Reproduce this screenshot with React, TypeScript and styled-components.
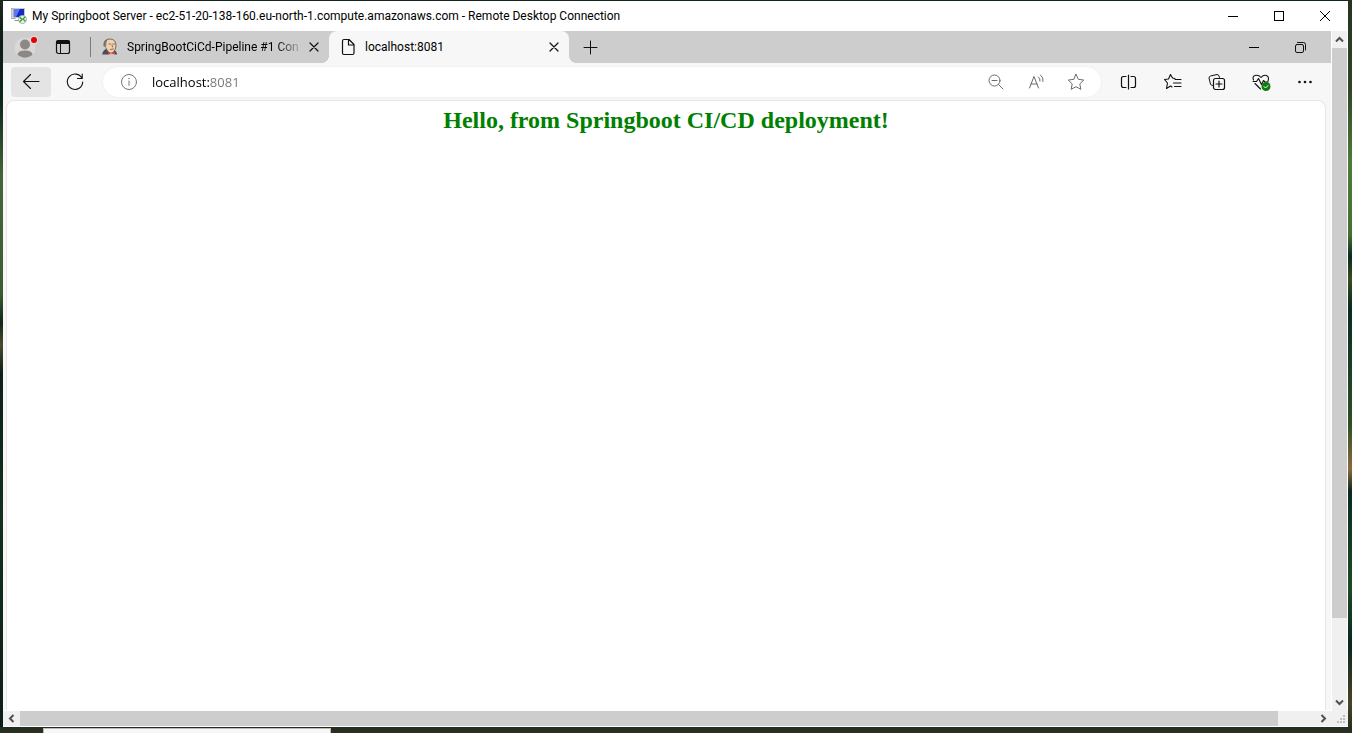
import React from 'react';
import styled, { createGlobalStyle, css } from 'styled-components';

const GlobalStyle = createGlobalStyle`
  *, *::before, *::after { box-sizing: border-box; }
  body { margin: 0; background: #12261d; font-family: Roboto, "Open Sans", sans-serif; font-size: 12px; color: #000; }
  button, input { font: inherit; color: inherit; }
`;

const Desktop = styled.div`
  display: flex;
  flex-direction: column;
  min-height: 100vh;
  padding: 1px 4px 0 3px;
  background:
    linear-gradient(#232c20, #2b3122) bottom / 100% 6px no-repeat,
    linear-gradient(#1c2a1e, #0b1d16 6%, #10281b 14%, #46653a 24%, #3f5c30 40%, #10281d 44%, #4a4a2c 47%, #0c2018 51%, #14301f 70%, #0c1d16) left / 3px 100% no-repeat,
    linear-gradient(#26331f, #2f4526 12%, #4f7a38 22%, #47702f 32%, #0b2a20 35%, #3a4c20 38%, #0a2a22 42%, #2d5026 58%, #8c6a3c 64%, #0a2a22 67%, #1d4a24 80%, #0a2620 88%, #4a4424 96%, #202c1d) right / 4px 100% no-repeat;
`;

const Window = styled.main`
  flex: 1;
  display: flex;
  flex-direction: column;
  background: #fff;
`;

const TitleBar = styled.header`
  display: flex;
  align-items: center;
  height: 30px;
  padding-left: 8px;
`;

const Title = styled.h1`
  flex: 1;
  margin: 0 0 0 5px;
  font-size: 12px;
  line-height: 16px;
  font-weight: 400;
  white-space: nowrap;
`;

const PlainButton = styled.button`
  display: flex;
  align-items: center;
  justify-content: center;
  flex: none;
  padding: 0;
  border: 0;
  background: none;
`;

const CaptionButton = styled(PlainButton)`
  width: 46px;
  height: 30px;
`;

const Session = styled.div`
  flex: 1;
  display: grid;
  grid-template-columns: minmax(0, 1fr) 16px;
  grid-template-rows: minmax(0, 1fr) 15px;
  background: #f0f0f0;
  border-bottom: 1px solid #fff;
`;

const Browser = styled.section`
  display: flex;
  flex-direction: column;
  background: #f7f7f7;
  border-right: 1px solid #fff;
  border-bottom: 1px solid #fff;
`;

const TabStrip = styled.div`
  display: flex;
  align-items: center;
  height: 32px;
  padding-right: 8px;
  background: #cdcdcd;
`;

const ProfileButton = styled(PlainButton)`
  width: 40px;
  height: 32px;
  padding-left: 6px;
`;

const TabActionsButton = styled(PlainButton)`
  width: 40px;
  height: 32px;
`;

const Divider = styled.span`
  width: 1px;
  height: 20px;
  margin-left: 7px;
  background: #7a7a7a;
`;

const Tab = styled.div<{ $active?: boolean }>`
  position: relative;
  display: flex;
  align-items: center;
  flex: none;
  width: ${p => (p.$active ? 240 : 238)}px;
  height: 32px;
  padding: 0 5px 0 11px;
  ${p => p.$active && css`
    background: #f7f7f7;
    border-radius: 8px 8px 0 0;
    &::before, &::after {
      content: '';
      position: absolute;
      bottom: 0;
      width: 8px;
      height: 8px;
    }
    &::before { left: -8px; background: radial-gradient(circle at 0 0, transparent 8px, #f7f7f7 8px); }
    &::after { right: -8px; background: radial-gradient(circle at 100% 0, transparent 8px, #f7f7f7 8px); }
  `}
`;

const TabLabel = styled.button<{ $fade?: boolean }>`
  flex: 1;
  display: flex;
  align-items: center;
  gap: 9px;
  min-width: 0;
  height: 32px;
  padding: 0;
  border: 0;
  background: none;
  white-space: nowrap;
  line-height: 16px;
  text-align: left;
  svg { flex: none; }
  span { flex: 1; min-width: 0; overflow: hidden; }
  ${p => p.$fade && css`
    span { mask-image: linear-gradient(to right, #000 calc(100% - 28px), transparent); }
  `}
`;

const CloseTab = styled(PlainButton)`
  width: 20px;
  height: 20px;
`;

const NewTab = styled(PlainButton)`
  width: 32px;
  height: 32px;
  margin-left: 5px;
`;

const Spacer = styled.span`
  flex: 1;
`;

const Toolbar = styled.div`
  display: flex;
  align-items: center;
  padding: 4px 4px 3px 8px;
`;

const NavButton = styled(PlainButton)<{ $hover?: boolean }>`
  width: 40px;
  height: 30px;
  border-radius: 4px;
  background: ${p => (p.$hover ? '#e4e4e4' : 'none')};
`;

const ToolButton = styled(PlainButton)`
  width: 44px;
  height: 30px;
`;

const Navigation = styled.nav`
  display: flex;
  gap: 4px;
`;

const AddressBar = styled.form`
  flex: 1;
  display: flex;
  align-items: center;
  height: 30px;
  margin: 0 6px 0 8px;
  padding: 0 5px 0 6px;
  border-radius: 15px;
  background: #fff;
  box-shadow: 0 0 2px #e4e4e4;
`;

const Address = styled.input`
  flex: 1;
  min-width: 0;
  height: 30px;
  margin-left: 3px;
  padding: 0;
  border: 0;
  outline: 0;
  font-family: "Open Sans", "Noto Sans", sans-serif;
  font-size: 13px;
  color: transparent;
  background: linear-gradient(to right, #000 57px, #767676 57px);
  background-clip: text;
`;

const Page = styled.article`
  flex: 1;
  margin: 0 5px 0 3px;
  border: 1px solid #e6e6e6;
  border-bottom: 0;
  border-radius: 8px 8px 0 0;
  background: #fff;
  text-align: center;
`;

const Greeting = styled.h2`
  margin: 5px 8px 20px;
  font: bold 24px/28px "Liberation Serif", "Times New Roman", serif;
  color: #008000;
`;

const ScrollBar = styled.div<{ $horizontal?: boolean }>`
  display: flex;
  flex-direction: ${p => (p.$horizontal ? 'row' : 'column')};
  min-width: 0;
  border-right: ${p => (p.$horizontal ? 0 : 1)}px solid #fff;
`;

const Arrow = styled(PlainButton)<{ $horizontal?: boolean }>`
  width: ${p => (p.$horizontal ? 17 : 15)}px;
  height: ${p => (p.$horizontal ? 15 : 17)}px;
`;

const Track = styled.div<{ $horizontal?: boolean }>`
  flex: 1;
  display: flex;
  flex-direction: ${p => (p.$horizontal ? 'row' : 'column')};
`;

const Thumb = styled.div<{ $visible: number }>`
  flex: ${p => p.$visible};
  background: #cdcdcd;
`;

const Remainder = styled.div<{ $hidden: number }>`
  flex: ${p => p.$hidden};
`;

const Grip = styled.div`
  display: flex;
  align-items: flex-end;
  justify-content: flex-end;
  padding: 2px;
`;

const Taskbar = styled.footer`
  height: 6px;
  padding: 1px 0 0 40px;
`;

const TaskPreview = styled.div`
  width: 288px;
  height: 5px;
  border: 1px solid #bbb;
  border-bottom: 0;
  background: #f7f7f7;
`;

const Icon = ({ w = 20, h = 20, color = '#111', stroke = 1, children }: {
  w?: number; h?: number; color?: string; stroke?: number; children: React.ReactNode;
}) => (
  <svg width={w} height={h} viewBox={`0 0 ${w} ${h}`} fill="none" stroke={color} strokeWidth={stroke}
    strokeLinecap="round" strokeLinejoin="round" aria-hidden="true">{children}</svg>
);

const RemoteIcon = () => (
  <Icon w={16} h={16}>
    <rect x="0.5" y="0.5" width="4" height="10" fill="#d4d6d8" stroke="#a5a9ae" />
    <rect x="2.5" y="0.5" width="11" height="9" fill="#1428c8" stroke="#c4c8d0" />
    <path d="M3 1h6L5 9H3z" fill="#5b78ee" stroke="none" />
    <path d="M4 12.5h4" stroke="#8a8a8a" />
    <circle cx="11.5" cy="11.5" r="4" fill="#eef2ec" stroke="#a9b0a9" />
    <path d="M9 9.5l2 2-2 2M14 9l-2 2 2 2" stroke="#2f9e32" strokeWidth="1.2" />
  </Icon>
);

const ProfileIcon = () => (
  <Icon w={24} h={24}>
    <g stroke="none">
      <circle cx="11" cy="13" r="10.5" fill="#dad8d6" />
      <circle cx="11" cy="9.5" r="5" fill="#8b8886" />
      <path d="M3.5 19.5Q4 15.5 11 15.5t7.5 4A10.5 10.5 0 0 1 3.5 19.5Z" fill="#8b8886" />
      <circle cx="20" cy="5" r="4" fill="#dedede" />
      <circle cx="20" cy="5" r="3" fill="#e60000" />
    </g>
  </Icon>
);

const ButlerIcon = () => (
  <Icon w={16} h={18}>
    <g stroke="none">
      <path d="M0 16.5Q1 12 4 11l8 1q3 1.5 3 4.5z" fill="#46515c" />
      <path d="M2 7Q2 1 8 1q5.5 0 6 6l-.5 4Q12 14.5 9 14.5q-4-.5-5-4Q2 10 2 7Z" fill="#f0d2ac" />
      <path d="M2 8Q1 3 5.5 1.5L4.5 5l-.5 5Z" fill="#8d8577" />
      <path d="M6 13l3 1.5 3-1 .5 3H6z" fill="#f7f7f7" />
      <path d="M6 13.5l3 1.2 3.5-1.4v3L9 15.5l-3 1.2z" fill="#d33833" />
    </g>
    <path d="M2 8Q1 1 8 1q6 0 6 7-.5 4-2 5.5M4 10q.5 2.5 2.5 3.5M7 6h1.5M11 6h1.5M10 7l.5 2M8.5 11.5l3-.5" stroke="#4a423c" strokeWidth=".7" />
  </Icon>
);

const CloseGlyph = () => (
  <Icon w={10} h={10}><path d="M1 1l8 8M9 1L1 9" strokeWidth="1.2" /></Icon>
);

const Chevron = ({ turn }: { turn: number }) => (
  <Icon w={11} h={11} color="#505050" stroke={2}>
    <path d="M2 7.5l3.5-3.5L9 7.5" strokeLinecap="butt" strokeLinejoin="miter" transform={`rotate(${turn} 5.5 5.5)`} />
  </Icon>
);

export default function App() {
  return (
    <Desktop>
      <GlobalStyle />
      <Window>
        <TitleBar>
          <RemoteIcon />
          <Title>My Springboot Server - ec2-51-20-138-160.eu-north-1.compute.amazonaws.com - Remote Desktop Connection</Title>
          <CaptionButton aria-label="Minimize"><Icon w={10} h={10} color="#000"><path d="M0 5.5h10" /></Icon></CaptionButton>
          <CaptionButton aria-label="Maximize"><Icon w={10} h={10} color="#000"><rect x="0.5" y="0.5" width="9" height="9" strokeLinejoin="miter" /></Icon></CaptionButton>
          <CaptionButton aria-label="Close"><Icon w={10} h={10} color="#000"><path d="M0 0l10 10M10 0L0 10" /></Icon></CaptionButton>
        </TitleBar>

        <Session>
          <Browser>
            <TabStrip>
              <ProfileButton aria-label="Profile"><ProfileIcon /></ProfileButton>
              <TabActionsButton aria-label="Tab actions">
                <Icon w={16} h={16}>
                  <rect x="1.5" y="1.5" width="13" height="13" rx="2" strokeWidth="1.2" />
                  <path d="M2 2.5h12M2 4h12" strokeWidth="2" />
                  <path d="M5.5 5v9" />
                </Icon>
              </TabActionsButton>
              <Divider />
              <Tab>
                <TabLabel $fade>
                  <ButlerIcon />
                  <span>SpringBootCiCd-Pipeline #1 Con</span>
                </TabLabel>
                <CloseTab aria-label="Close tab"><CloseGlyph /></CloseTab>
              </Tab>
              <Tab $active>
                <TabLabel>
                  <Icon w={16} h={18}>
                    <path d="M2.5 3q0-1.5 1.5-1.5h5l5 5V15q0 1.5-1.5 1.5H4q-1.5 0-1.5-1.5zM8.5 2v5H14" strokeWidth="1.2" />
                  </Icon>
                  <span>localhost:8081</span>
                </TabLabel>
                <CloseTab aria-label="Close tab"><CloseGlyph /></CloseTab>
              </Tab>
              <NewTab aria-label="New tab"><Icon w={15} h={15}><path d="M1 7.5h13M7.5 1v13" /></Icon></NewTab>
              <Spacer />
              <CaptionButton aria-label="Minimize browser"><Icon w={10} h={10} color="#000"><path d="M0 5.5h10" /></Icon></CaptionButton>
              <CaptionButton aria-label="Restore browser">
                <Icon w={11} h={11}>
                  <rect x="0.5" y="2.5" width="8" height="8" rx="1.5" />
                  <path d="M2.5.5H8.5q2 0 2 2V8" />
                </Icon>
              </CaptionButton>
            </TabStrip>

            <Toolbar>
              <Navigation>
                <NavButton $hover aria-label="Back">
                  <Icon><path d="M18 9.5H2.5M9.5 2.5L2.5 9.5l7 7" strokeWidth="1.1" /></Icon>
                </NavButton>
                <NavButton aria-label="Refresh">
                  <Icon><path d="M17 6.5A7.7 7.7 0 1 0 17.7 10M17.2 2v4.5h-4.7" strokeWidth="1.1" /></Icon>
                </NavButton>
              </Navigation>
              <AddressBar onSubmit={e => e.preventDefault()}>
                <NavButton type="button" aria-label="Site information">
                  <Icon color="#767676"><circle cx="10" cy="10" r="7.5" /><path d="M10 9v4.5" /><path d="M10 6.5v.1" strokeWidth="1.5" /></Icon>
                </NavButton>
                <Address aria-label="Address" defaultValue="localhost:8081" />
                <NavButton type="button" aria-label="Zoom out">
                  <Icon color="#6a6a6a"><circle cx="8.500" cy="8.500" r="5.500" /><path d="M12.5 12.5l4.5 4.5M6 8.5h5" /></Icon>
                </NavButton>
                <NavButton type="button" aria-label="Read aloud">
                  <Icon color="#6a6a6a"><path d="M3.500 16L8 4.500 12.500 16M5 12h6M12.500 5q2 1.500 1.500 4M14.500 3q3.500 2.500 2.500 6.500" /></Icon>
                </NavButton>
                <NavButton type="button" aria-label="Add to favorites">
                  <Icon color="#6a6a6a"><path d="M10 2.300l2.400 5 5.300.8-3.900 3.800 1 5.400L10 14.700l-4.800 2.600 1-5.400L2.300 8.100l5.300-.8z" /></Icon>
                </NavButton>
              </AddressBar>
              <ToolButton aria-label="Split screen">
                <Icon><path d="M9.5 3v14M7 4.5H4.5Q2.5 4.5 2.5 6.5v7q0 2 2 2H7M12 4.5h2.5q2 0 2 2v7q0 2-2 2H12" strokeWidth="1.2" /></Icon>
              </ToolButton>
              <ToolButton aria-label="Favorites">
                <Icon><path d="M12 6.500L9.500 6 7.500 2.500 5.500 7l-4 .5 3 3.500-1 5.500 4-2.500 1.500 1M12 7.500h6M10.500 11h7.500M11.500 14.500h6.500" strokeWidth="1.1" /></Icon>
              </ToolButton>
              <ToolButton aria-label="Collections">
                <Icon><path d="M5.500 13.500Q4 13.500 3.500 12L2 6Q2 4.500 3.500 4L10 2.500q1.500 0 2 1.500l.5 1.500" /><rect x="6.5" y="6.5" width="11" height="11" rx="2" strokeWidth="1.2" /><path d="M12 9v6M9 12h6" strokeWidth="1.2" /></Icon>
              </ToolButton>
              <ToolButton aria-label="Browser essentials">
                <Icon>
                  <path d="M2.500 8Q1 4.500 4 3.500 7.500 2.500 10 5.500 12.500 2.500 15.500 3.500 18.500 5 17 9M4 11.500l5.500 5.500M2 9.500h3.500L7.500 6.500l3 6 2-4 1.500 1.500h3" strokeWidth="1.1" />
                  <circle cx="15" cy="14.5" r="4.5" fill="#107c10" stroke="none" />
                  <path d="M13 14.5l1.5 1.5 2.5-2.5" stroke="#fff" />
                </Icon>
              </ToolButton>
              <ToolButton aria-label="Settings and more">
                <Icon><g fill="#111" stroke="none"><circle cx="4.5" cy="10" r="1.3" /><circle cx="10" cy="10" r="1.3" /><circle cx="15.5" cy="10" r="1.3" /></g></Icon>
              </ToolButton>
            </Toolbar>

            <Page>
              <Greeting>Hello, from Springboot CI/CD deployment!</Greeting>
            </Page>
          </Browser>

          <ScrollBar>
            <Arrow aria-label="Scroll up"><Chevron turn={0} /></Arrow>
            <Track><Thumb $visible={15} /><Remainder $hidden={2} /></Track>
            <Arrow aria-label="Scroll down"><Chevron turn={180} /></Arrow>
          </ScrollBar>
          <ScrollBar $horizontal>
            <Arrow $horizontal aria-label="Scroll left"><Chevron turn={-90} /></Arrow>
            <Track $horizontal><Thumb $visible={34} /><Remainder $hidden={1} /></Track>
            <Arrow $horizontal aria-label="Scroll right"><Chevron turn={90} /></Arrow>
          </ScrollBar>
          <Grip>
            <Icon w={9} h={9}><path d="M6 0h2v2H6zM3 3h2v2H3zM6 3h2v2H6zM0 6h2v2H0zM3 6h2v2H3zM6 6h2v2H6z" fill="#bdbdbd" stroke="none" /></Icon>
          </Grip>
        </Session>
      </Window>
      <Taskbar><TaskPreview /></Taskbar>
    </Desktop>
  );
}
